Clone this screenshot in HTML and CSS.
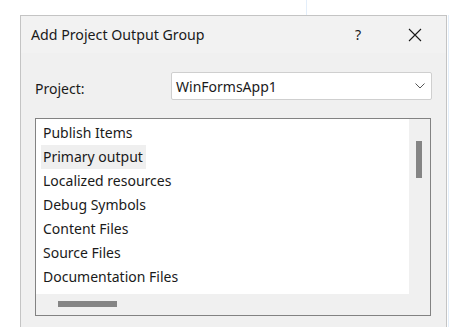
FILE: index.html
```html
<!DOCTYPE html>
<html lang="en">
<head>
    <meta charset="UTF-8">
    <meta name="viewport" content="width=device-width, initial-scale=1.0">
    <title>Add Project Output Group</title>
    <link rel="stylesheet" href="styles.css">
</head>
<body>
    <div class="backdrop"><div class="backdrop-line"></div></div>
    <div class="screen">
        <div class="dialog">
            <div class="titlebar">
                <span class="title">Add Project Output Group</span>
                <span class="help">?</span>
                <span class="close">
                    <svg width="14" height="14" viewBox="0 0 14 14">
                        <path d="M1 1 L13 13 M13 1 L1 13" stroke="#1a1a1a" stroke-width="1.1" fill="none"/>
                    </svg>
                </span>
            </div>
            <div class="content">
                <div class="form-row">
                    <label for="project">Project:</label>
                    <div class="combo" id="project">
                        <span>WinFormsApp1</span>
                        <svg width="10" height="6" viewBox="0 0 10 6">
                            <path d="M0.5 0.5 L5 5 L9.5 0.5" stroke="#555" stroke-width="1" fill="none"/>
                        </svg>
                    </div>
                </div>
                <div class="listbox">
                    <div class="list-main">
                        <ul class="items">
                            <li>Publish Items</li>
                            <li class="selected">Primary output</li>
                            <li>Localized resources</li>
                            <li>Debug Symbols</li>
                            <li>Content Files</li>
                            <li>Source Files</li>
                            <li>Documentation Files</li>
                        </ul>
                        <div class="vscroll"><div class="vthumb"></div></div>
                    </div>
                    <div class="hscroll"><div class="hthumb"></div></div>
                </div>
            </div>
        </div>
        <div class="side-line"></div>
    </div>
</body>
</html>
```

FILE: styles.css
```css
body {
    margin: 0;
    background-color: #fff;
    font-family: "Noto Sans", "Open Sans", sans-serif;
    color: #1a1a1a;
    height: 327px;
    overflow: hidden;
}
.backdrop {
    height: 15px;
}
.backdrop-line {
    margin-left: 306px;
    width: 1px;
    height: 15px;
    background-color: #e3eefa;
}
.screen {
    display: flex;
}
.dialog {
    margin-left: 20px;
    width: 425px;
    height: 312px;
    border: 1px solid #c4c4c4;
    border-bottom: none;
    background-color: #f0f0f0;
}
.side-line {
    width: 1px;
    margin-left: 1px;
    background-color: #e3eefa;
}
.titlebar {
    height: 37px;
    background-color: #f2f2f2;
    display: flex;
    align-items: center;
    font-size: 14.2px;
}
.title {
    margin-left: 10px;
    flex: 1;
}
.help {
    width: 20px;
    text-align: center;
    margin-right: 40px;
}
.close {
    width: 14px;
    height: 14px;
    margin-right: 24px;
    display: flex;
}
.content {
    padding: 19px 14px 0 14px;
}
.form-row {
    display: flex;
    align-items: center;
    height: 28px;
    font-size: 14px;
}
.form-row label {
    width: 136px;
    padding-top: 4px;
}
.combo {
    flex: 1;
    height: 26px;
    background-color: #fff;
    border: 1px solid #cfcfcf;
    border-radius: 2px;
    display: flex;
    align-items: center;
    justify-content: space-between;
    padding: 0 6px 0 4px;
    font-size: 14px;
}
.combo svg {
    margin-bottom: 1px;
}
.listbox {
    margin-top: 18px;
    height: 196px;
    width: 394px;
    border: 1px solid #828282;
    background-color: #f0f0f0;
    display: flex;
    flex-direction: column;
}
.list-main {
    display: flex;
    height: 175px;
}
.items {
    list-style: none;
    margin: 0;
    padding: 2px 0 0 5px;
    flex: 1;
    background-color: #fff;
    font-size: 14px;
}
.items li {
    height: 24px;
    line-height: 24px;
    padding-left: 2px;
}
.items li.selected {
    background-color: #efefef;
    width: fit-content;
    padding-right: 3px;
}
.vscroll {
    width: 21px;
    background-color: #f0f0f0;
    padding-top: 22px;
}
.vthumb {
    width: 6px;
    height: 37px;
    margin-left: 7px;
    background-color: #858585;
}
.hscroll {
    flex: 1;
    padding: 7px 0 0 22px;
}
.hthumb {
    width: 59px;
    height: 6px;
    background-color: #858585;
}
```
